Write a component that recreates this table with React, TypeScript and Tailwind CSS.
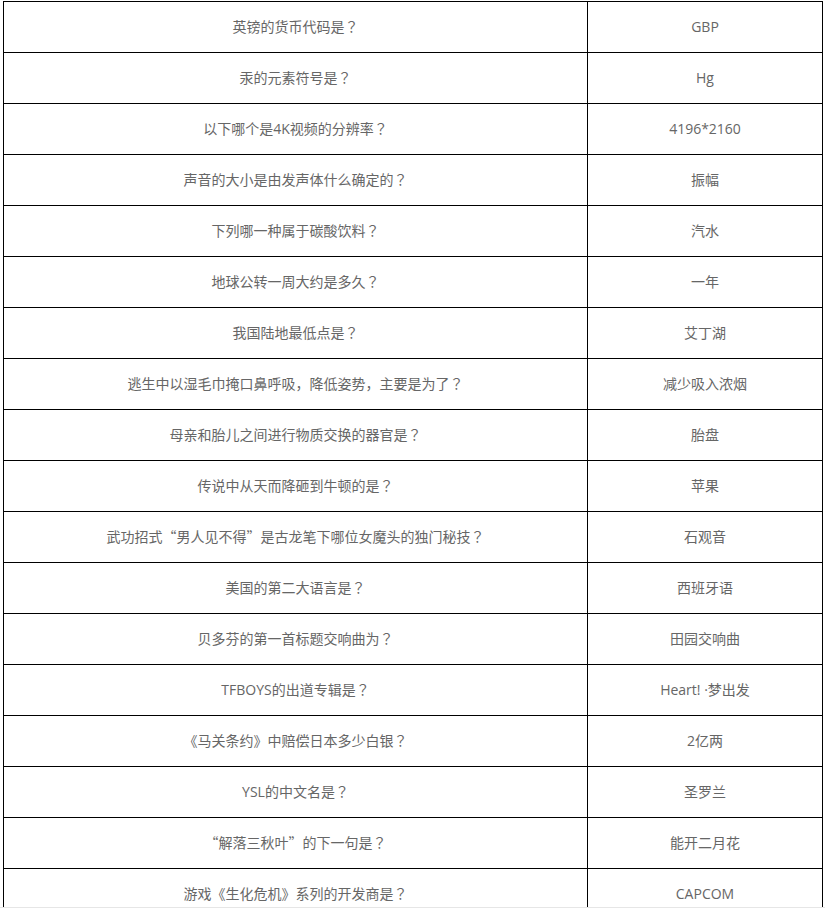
const rows: [string, string][] = [
  ["英镑的货币代码是？", "GBP"],
  ["汞的元素符号是？", "Hg"],
  ["以下哪个是4K视频的分辨率？", "4196*2160"],
  ["声音的大小是由发声体什么确定的？", "振幅"],
  ["下列哪一种属于碳酸饮料？", "汽水"],
  ["地球公转一周大约是多久？", "一年"],
  ["我国陆地最低点是？", "艾丁湖"],
  ["逃生中以湿毛巾掩口鼻呼吸，降低姿势，主要是为了？", "减少吸入浓烟"],
  ["母亲和胎儿之间进行物质交换的器官是？", "胎盘"],
  ["传说中从天而降砸到牛顿的是？", "苹果"],
  ["武功招式“男人见不得”是古龙笔下哪位女魔头的独门秘技？", "石观音"],
  ["美国的第二大语言是？", "西班牙语"],
  ["贝多芬的第一首标题交响曲为？", "田园交响曲"],
  ["TFBOYS的出道专辑是？", "Heart! ·梦出发"],
  ["《马关条约》中赔偿日本多少白银？", "2亿两"],
  ["YSL的中文名是？", "圣罗兰"],
  ["“解落三秋叶”的下一句是？", "能开二月花"],
  ["游戏《生化危机》系列的开发商是？", "CAPCOM"],
  ["", ""],
];

// latin runs get a latin face, the question mark a centred full-width one, rest stays CJK
function Mixed({ text }: { text: string }) {
  const parts = text.split(/([\x20-\x7E\u00B7]+|？)/).filter(Boolean);
  return (
    <>
      {parts.map((p, i) => {
        if (p === "？")
          return (
            <span key={i} lang="zh-TW" className="font-['Noto_Sans_CJK_TC',sans-serif]">
              {p}
            </span>
          );
        if (/^[\x20-\x7E\u00B7]+$/.test(p))
          return (
            <span key={i} className="font-['Open_Sans',sans-serif]">
              {p}
            </span>
          );
        return <span key={i}>{p}</span>;
      })}
    </>
  );
}

export default function App() {
  return (
    <div className="w-[825px] h-[912px] bg-white">
      {/* table area, cropped at the bottom like the screenshot */}
      <div className="h-[908px] overflow-hidden border-b border-[#e6e6e6]">
        <table
          lang="zh-CN"
          className="ml-[3px] mt-[1px] w-[820px] border-collapse font-['Noto_Sans_CJK_SC',sans-serif] text-[14px] text-[#666]"
        >
          <tbody>
            {rows.map(([q, a], i) => (
              <tr key={i} className="h-[51px]">
                <td className="w-[584px] border border-black p-0 pb-[2px] text-center align-middle">
                  <Mixed text={q} />
                </td>
                <td className="border border-black p-0 pb-[2px] text-center align-middle">
                  <Mixed text={a} />
                </td>
              </tr>
            ))}
          </tbody>
        </table>
      </div>
    </div>
  );
}
